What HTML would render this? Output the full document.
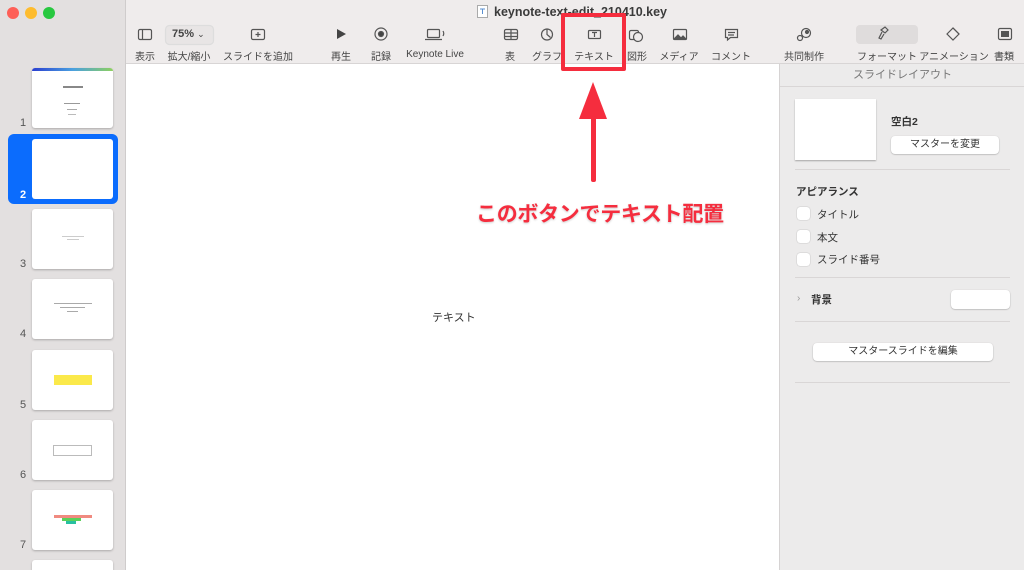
<!DOCTYPE html>
<html><head><meta charset="utf-8"><style>
*{margin:0;padding:0;box-sizing:border-box}
html,body{width:1024px;height:570px;overflow:hidden}
body{background:#fff;font-family:"Liberation Sans","Noto Sans CJK JP",sans-serif;position:relative;color:#3a3a3a}
.abs{position:absolute}
#side{left:0;top:0;width:126px;height:570px;background:#e3e0e0;border-right:1px solid #cfcccc}
#tb{left:126px;top:0;width:898px;height:64px;background:#efecec;border-bottom:1px solid #d8d5d5}
#canvas{left:127px;top:64px;width:652px;height:506px;background:#fff}
#insp{left:779px;top:64px;width:245px;height:506px;background:#ecebeb;border-left:1px solid #d6d3d3}
.dot{width:12px;height:12px;border-radius:50%;top:7px}
.lbl{font-size:10px;color:#444;top:48px;white-space:nowrap;transform:translateX(-50%)}
.th{left:32px;width:81px;height:60px;background:#fff;border-radius:3px;box-shadow:0 1px 2px rgba(0,0,0,.25)}
.num{left:20px;font-size:11px;color:#555}
.hr{left:15px;width:215px;height:1px;background:#d9d6d6}
.btn{background:#fff;border-radius:4px;box-shadow:0 0.5px 1.5px rgba(0,0,0,.3);font-size:10px;text-align:center;color:#333}
.cb{left:17px;width:13px;height:13px;background:#fff;border-radius:3px;box-shadow:0 0 1px rgba(0,0,0,.4)}
.ct{left:37px;font-size:10.5px;color:#333}
</style></head><body>
<div id="side" class="abs"></div>
<div class="abs dot" style="left:7px;background:#fe5f57"></div>
<div class="abs dot" style="left:25px;background:#febc2e"></div>
<div class="abs dot" style="left:43px;background:#28c840"></div>

<div class="abs th" style="top:68px;overflow:hidden"><div style="height:3px;background:linear-gradient(90deg,#2a3fd0,#4aa0e0,#8ed060)"></div>
<div style="position:absolute;left:31px;top:18px;width:20px;height:2px;background:#888"></div>
<div style="position:absolute;left:32px;top:35px;width:16px;height:1px;background:#999"></div>
<div style="position:absolute;left:35px;top:41px;width:10px;height:1px;background:#aaa"></div>
<div style="position:absolute;left:36px;top:46px;width:8px;height:1px;background:#bbb"></div></div>
<div class="abs num" style="top:117px">1</div>
<div class="abs" style="left:8px;top:134px;width:110px;height:70px;background:#0b6cfd;border-radius:6px"></div>
<div class="abs th" style="top:139px;left:32px;width:81px;height:60px;box-shadow:none"></div>
<div class="abs num" style="top:189px;color:#fff;font-weight:bold">2</div>
<div class="abs th" style="top:209px"><div style="position:absolute;left:30px;top:27px;width:22px;height:1px;background:#ccc"></div><div style="position:absolute;left:35px;top:30px;width:12px;height:1px;background:#ccc"></div></div>
<div class="abs num" style="top:258px">3</div>
<div class="abs th" style="top:279px"><div style="position:absolute;left:22px;top:24px;width:38px;height:1px;background:#aaa"></div><div style="position:absolute;left:28px;top:28px;width:25px;height:1px;background:#aaa"></div><div style="position:absolute;left:35px;top:32px;width:11px;height:1px;background:#aaa"></div></div>
<div class="abs num" style="top:328px">4</div>
<div class="abs th" style="top:350px"><div style="position:absolute;left:22px;top:25px;width:38px;height:10px;background:#fbe94a"></div></div>
<div class="abs num" style="top:399px">5</div>
<div class="abs th" style="top:420px"><div style="position:absolute;left:21px;top:25px;width:39px;height:11px;border:1px solid #bbb"></div></div>
<div class="abs num" style="top:469px">6</div>
<div class="abs th" style="top:490px"><div style="position:absolute;left:22px;top:25px;width:38px;height:3px;background:#f08a80"></div><div style="position:absolute;left:30px;top:28px;width:19px;height:3px;background:#5ad05a"></div><div style="position:absolute;left:34px;top:31px;width:10px;height:3px;background:#28c0a0"></div></div>
<div class="abs num" style="top:539px">7</div>
<div class="abs th" style="top:560px;height:10px;border-radius:3px 3px 0 0"></div>

<div id="tb" class="abs"></div>
<svg class="abs" style="left:477px;top:5px" width="11" height="13"><rect x="0.5" y="0.5" width="10" height="12" fill="#fff" stroke="#aaa"/><path d="M3 4h5M5.5 4v5" stroke="#5a8fd0"/></svg>
<div class="abs" style="left:494px;top:5px;font-size:12.5px;font-weight:bold;color:#3b3b3b">keynote-text-edit_210410.key</div>

<svg class="abs" style="left:0;top:0" width="1024" height="64" fill="none" stroke="#555" stroke-width="1.2">
<rect x="138.5" y="29.5" width="13" height="10" rx="1.5"/><line x1="142.5" y1="29.5" x2="142.5" y2="39.5"/>
<rect x="165.5" y="25.5" width="48" height="19" rx="4" fill="#e8e5e5" stroke="#ddd"/>
<rect x="251.5" y="29.5" width="13" height="10" rx="1.5"/><path d="M258 32v5M255.5 34.5h5"/>
<path d="M337 29l9 5-9 5z" fill="#444" stroke="none"/>
<circle cx="381" cy="34" r="6"/><circle cx="381" cy="34" r="2.5" fill="#444"/>
<rect x="427.5" y="29.5" width="12" height="8" rx="1"/><path d="M425 39.5h17M443 31q1.5 2.5 0 5"/>
<rect x="504.5" y="29.5" width="13" height="10" rx="1.5"/><path d="M504.5 33h13M504.5 36.5h13M511 29.5v10"/>
<circle cx="547" cy="34.5" r="5.5"/><path d="M547 29v5.5l3.5 3"/>
<rect x="588.5" y="30.5" width="12" height="8" rx="1"/><path d="M592 32.5h5M594.5 32.5v4.5"/>
<rect x="629.5" y="30.5" width="9" height="9" rx="1.5"/><circle cx="638" cy="37" r="4.5" fill="#efecec"/>
<rect x="673.5" y="29.5" width="13" height="10" rx="1"/><path d="M674 39l4-4 3 3 2-2 3 3" fill="#555"/>
<path d="M725.5 29.5h12v8h-7l-3 2.5v-2.5h-2z"/><path d="M728 32.5h7M728 35h6"/>
<circle cx="806" cy="33" r="4.5"/><circle cx="800" cy="38" r="2.5"/><circle cx="807" cy="32" r="1.5" fill="#555"/>
<rect x="856" y="25" width="62" height="19" rx="4" fill="#dfdcdc" stroke="none"/>
<path d="M881 30l4-3 3 3-3 3zM882 32l-3 6 2 1 3-5" />
<path d="M947 34l6-6 6 6-6 6z"/><path d="M953 28l6 6"/>
<rect x="998.5" y="28.5" width="13" height="11" rx="1.5"/><rect x="1001" y="31" width="8" height="6" fill="#555" stroke="none"/>
</svg>
<div class="abs" style="left:172px;top:28px;font-size:11px;font-weight:bold;color:#444">75% <span style="font-weight:normal;font-size:9px">⌄</span></div>
<div class="abs lbl" style="left:145px">表示</div>
<div class="abs lbl" style="left:189px">拡大/縮小</div>
<div class="abs lbl" style="left:258px">スライドを追加</div>
<div class="abs lbl" style="left:341px">再生</div>
<div class="abs lbl" style="left:381px">記録</div>
<div class="abs lbl" style="left:435px;top:49px">Keynote Live</div>
<div class="abs lbl" style="left:510px">表</div>
<div class="abs lbl" style="left:547px">グラフ</div>
<div class="abs lbl" style="left:594px">テキスト</div>
<div class="abs lbl" style="left:637px">図形</div>
<div class="abs lbl" style="left:679px">メディア</div>
<div class="abs lbl" style="left:731px">コメント</div>
<div class="abs lbl" style="left:804px">共同制作</div>
<div class="abs lbl" style="left:887px">フォーマット</div>
<div class="abs lbl" style="left:954px">アニメーション</div>
<div class="abs lbl" style="left:1004px">書類</div>

<div id="canvas" class="abs"></div>
<div class="abs" style="left:432px;top:309px;font-size:11px;color:#333">テキスト</div>

<div id="insp" class="abs">
<div class="abs" style="left:0;top:0;width:245px;height:23px;border-bottom:1px solid #d9d6d6;text-align:center;font-size:11px;color:#777;line-height:22px">スライドレイアウト</div>
<div class="abs" style="left:15px;top:35px;width:81px;height:61px;background:#fff;box-shadow:0 1px 1.5px rgba(0,0,0,.3)"></div>
<div class="abs" style="left:111px;top:50px;font-size:10.5px;font-weight:bold;color:#333">空白2</div>
<div class="abs btn" style="left:111px;top:72px;width:108px;height:18px;line-height:18px">マスターを変更</div>
<div class="abs hr" style="top:105px"></div>
<div class="abs" style="left:16px;top:120px;font-size:10.5px;font-weight:bold;color:#333">アピアランス</div>
<div class="abs cb" style="top:143px"></div><div class="abs ct" style="top:143px">タイトル</div>
<div class="abs cb" style="top:166px"></div><div class="abs ct" style="top:166px">本文</div>
<div class="abs cb" style="top:189px"></div><div class="abs ct" style="top:188px">スライド番号</div>
<div class="abs hr" style="top:213px"></div>
<div class="abs" style="left:17px;top:229px;font-size:10px;color:#999">›</div>
<div class="abs" style="left:31px;top:228px;font-size:10.5px;font-weight:bold;color:#333">背景</div>
<div class="abs btn" style="left:171px;top:226px;width:59px;height:19px"></div>
<div class="abs hr" style="top:257px"></div>
<div class="abs btn" style="left:33px;top:279px;width:180px;height:18px;line-height:18px">マスタースライドを編集</div>
<div class="abs hr" style="top:318px"></div>
</div>

<div class="abs" style="left:561px;top:13px;width:65px;height:58px;border:4px solid #f52d3e;border-radius:2px"></div>
<svg class="abs" style="left:570px;top:78px" width="50" height="110">
<path d="M23 4L37 41H9z" fill="#f52d3e"/><rect x="21" y="38" width="5" height="66" rx="2" fill="#f52d3e"/>
</svg>
<div class="abs" style="left:476px;top:198px;font-size:21px;font-weight:bold;color:#f52d3e;letter-spacing:-0.3px;text-shadow:0 1px 2px rgba(0,0,0,.2)">このボタンでテキスト配置</div>
</body></html>
